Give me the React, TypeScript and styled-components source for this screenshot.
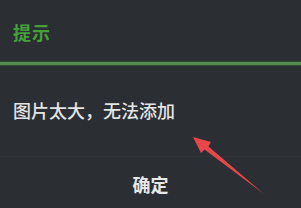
import React from "react";
import styled, { createGlobalStyle } from "styled-components";

const GlobalStyle = createGlobalStyle`
  html, body {
    margin: 0;
    padding: 0;
    background: #2b2e33;
  }
  body {
    font-family: "Noto Sans CJK SC", "Noto Sans", sans-serif;
  }
`;

const Dialog = styled.div`
  position: relative;
  width: 301px;
  height: 208px;
  background: #2b2e33;
  display: grid;
  grid-template-rows: 62px 3px 92px 1fr;
  overflow: hidden;
`;

const Header = styled.div`
  display: flex;
  align-items: center;
  padding-left: 13px;
  padding-top: 1px;
`;

const Title = styled.h1`
  margin: 0;
  font-size: 18px;
  font-weight: 700;
  color: #45a03a;
  letter-spacing: 1px;
`;

const Divider = styled.div`
  background: #528c4c;
  box-shadow: 0 -1px 0 #2f4a31, 0 1px 0 #2f4a31;
`;

const Body = styled.div`
  display: flex;
  align-items: center;
  padding: 0 0 2px 13px;
  border-bottom: 1px solid #2f3237;
`;

const Message = styled.p`
  margin: 0;
  font-size: 18px;
  font-weight: 500;
  color: #e4e4e4;
`;

const Footer = styled.div`
  display: flex;
  align-items: center;
  justify-content: center;
  padding-top: 2px;
`;

const Button = styled.button`
  background: none;
  border: none;
  padding: 0;
  font-family: inherit;
  font-size: 18px;
  font-weight: 700;
  color: #e8e8e8;
`;

const Arrow = styled.svg`
  position: absolute;
  left: 190px;
  top: 134px;
`;

export default function App() {
  return (
    <>
      <GlobalStyle />
      <Dialog>
        <Header>
          <Title>提示</Title>
        </Header>
        <Divider />
        <Body>
          <Message>图片太大，无法添加</Message>
        </Body>
        <Footer>
          <Button>确定</Button>
        </Footer>
        <Arrow width="80" height="64" viewBox="0 0 80 64">
          <polygon points="3,3 21,8 18.5,12.5 74,60 14.5,15.5 11,19" fill="#e8474a" />
        </Arrow>
      </Dialog>
    </>
  );
}
